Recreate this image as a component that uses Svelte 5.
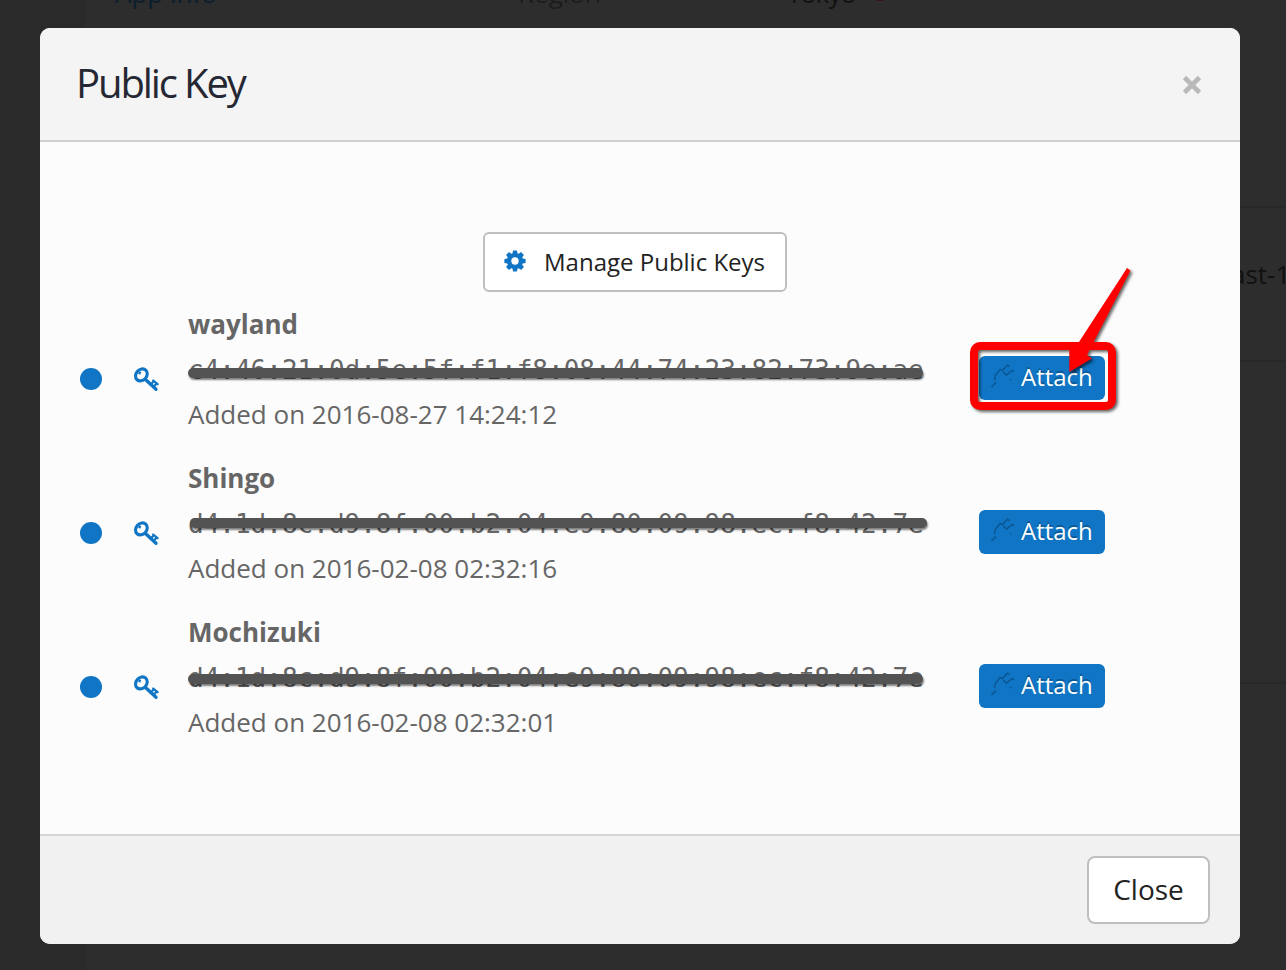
<script>
  const keys = [
    { name: 'wayland', print: 'c4:46:21:0d:5e:5f:f1:f8:08:44:74:23:82:73:9e:ae', added: '2016-08-27 14:24:12', bar: 'first' },
    { name: 'Shingo', print: 'd4:1d:8c:d9:8f:00:b2:04:e9:80:09:98:ec:f8:42:7e', added: '2016-02-08 02:32:16', bar: 'second' },
    { name: 'Mochizuki', print: 'd4:1d:8c:d9:8f:00:b2:04:e9:80:09:98:ec:f8:42:7e', added: '2016-02-08 02:32:01', bar: 'third' }
  ];
</script>

<div class="page">
  <div class="backdrop">
    <div class="rail"></div>
    <span class="behind info">App info</span>
    <span class="behind region">Region</span>
    <span class="behind city">Tokyo</span>
    <i class="pin"></i>
    <span class="behind zone">ast-1</span>
    <i class="rule r1"></i><i class="rule r2"></i><i class="rule r3"></i>
  </div>

  <section class="modal">
    <header>
      <h1>Public Key</h1>
      <button class="x" aria-label="Close">
        <svg width="20" height="20" viewBox="0 0 20 20"><path d="M2.5 2.5 17.5 17.5M17.5 2.5 2.5 17.5" stroke="#b9b9b9" stroke-width="4.6" /></svg>
      </button>
    </header>

    <main>
      <button class="manage">
        <svg width="22" height="22" viewBox="-11 -11 22 22">
          <g fill="#0f75c4">
            {#each [0, 45, 90, 135] as a}
              <path transform="rotate({a})" d="M-2-10.6H2L2.7-6V6L2 10.6H-2L-2.7 6V-6Z" />
            {/each}
            <circle r="8.1" />
          </g>
          <circle r="3.7" fill="#fff" />
        </svg>
        <span>Manage Public Keys</span>
      </button>

      <div class="list">
        {#each keys as k}
          <div class="row">
            <span class="dot"></span>
            <svg class="key" width="26" height="26" viewBox="0 0 26 26" fill="none" stroke="#0f75c4">
              <ellipse cx="8.400" cy="8.900" rx="6.500" ry="5.300" transform="rotate(-48 8.400 8.900)" stroke-width="3.100" />
              <path d="M7.300 5.600 6.200 8.200" stroke-width="2.200" />
              <path d="M12.500 13.500 23 23.300" stroke-width="3.300" stroke-linecap="round" />
              <path d="M17.500 18.800 20.800 15.300M20.500 21 23.800 17.300M20.200 14.500 24.600 18.200" stroke-width="2.200" stroke-linecap="round" />
            </svg>
            <div class="text">
              <strong>{k.name}</strong>
              <div class="print"><span class="hash">{k.print}</span><i class="bar {k.bar}"></i></div>
              <div>Added on {k.added}</div>
            </div>
            <button class="attach">
              <svg width="25" height="25" viewBox="0 0 25 25" fill="none" stroke="#0b5490" stroke-width="1.4">
                <path d="M.5 23 5 18.5M3.500 16.200 4.300 11.500 9 5.500 11.500 6.500 16.500 1.300 18.500 2.800M12 7.800 15.500 11 21 6.500 23 7.500M18.700 15.500h1.400" />
              </svg>
              <span>Attach</span>
            </button>
          </div>
        {/each}
      </div>
    </main>

    <footer><button class="close"><span>Close</span></button></footer>
  </section>

  <svg class="callout" width="200" height="180" viewBox="950 250 200 180">
    <rect x="974" y="346" width="138" height="60" rx="6" fill="none" stroke="#f00" stroke-width="8" />
    <path d="M1127 268 1130.500 270.500 1087 355 1092 358.500 1069.300 372V350H1074L1079 342Z" fill="#f00" />
  </svg>
</div>

<style>
  :global(body) { margin: 0; overflow: hidden; }
  .page {
    position: relative;
    box-sizing: border-box;
    width: 1286px;
    height: 970px;
    padding: 28px 46px 26px 40px;
    overflow: hidden;
    background: #2d2d2d;
    font-family: "Open Sans", "Noto Sans", sans-serif;
    font-size: 26px;
    color: #666;
  }
  .backdrop { position: absolute; inset: 0; }
  .rail { width: 86px; height: 100%; background: #2a2a2a; }
  .behind { position: absolute; line-height: 36px; white-space: nowrap; }
  .info { left: 115px; top: -25px; color: #0b1e2d; }
  .region { left: 518px; top: -25px; color: #1c1c1c; }
  .city { left: 787px; top: -25px; color: #111; font-weight: 500; letter-spacing: -0.7px; }
  .zone { left: 1231px; top: 256px; color: #111; }
  .pin { position: absolute; left: 872px; top: -15px; width: 16px; height: 16px; border-radius: 50%; background: #390d0d; }
  .rule { position: absolute; left: 1240px; right: 0; height: 2px; background: #282828; }
  .r1 { top: 206px; }
  .r2 { top: 360px; }
  .r3 { top: 682px; }

  .modal {
    position: relative;
    display: flex;
    flex-direction: column;
    height: 916px;
    border-radius: 10px;
    overflow: hidden;
    background: #fcfcfc;
  }
  header {
    display: flex;
    align-items: center;
    justify-content: space-between;
    box-sizing: border-box;
    height: 114px;
    padding: 0 38px 0 36px;
    background: #f4f4f4;
    border-bottom: 2px solid #d0d0d0;
  }
  h1 { margin: -2px 0 0; font-size: 40px; font-weight: 400; letter-spacing: -2.1px; line-height: 54px; color: #252733; }
  button { font: inherit; margin: 0; padding: 0; border: 0; background: none; }
  .x { display: flex; margin-top: 2px; }
  main { display: flex; flex: 1; flex-direction: column; align-items: center; padding-top: 90px; }
  .manage {
    display: flex;
    align-items: center;
    gap: 18px;
    box-sizing: border-box;
    width: 304px;
    height: 60px;
    margin-right: 10px;
    padding: 0 0 2px 19px;
    border: 2px solid #bfbfbf;
    border-radius: 6px;
    background: #fff;
    color: #222;
    font-size: 24px;
    white-space: nowrap;
  }
  .list { display: flex; flex-direction: column; align-self: stretch; gap: 19px; margin-top: 10px; }
  .row { display: flex; align-items: center; height: 135px; padding-left: 40px; }
  .dot { flex: none; width: 22px; height: 22px; margin-top: 19px; border-radius: 50%; background: #0f75c4; }
  .key { flex: none; margin: 19px 0 0 31px; }
  .text { width: 791px; margin-left: 29px; line-height: 45px; white-space: nowrap; }
  strong { display: block; font-weight: 700; }
  .print { position: relative; height: 45px; font-family: "DejaVu Sans Mono", monospace; }
  .hash { display: block; padding-top: 1px; }
  .bar { position: absolute; left: 0; width: 735px; height: 10px; border-radius: 6px; background: #535353; box-shadow: 1px 2px 2px rgba(0, 0, 0, 0.5); }
  .first { top: 21px; }
  .second { top: 17px; left: 2px; width: 737px; }
  .third { top: 19px; }
  .attach {
    display: flex;
    align-items: center;
    gap: 5px;
    box-sizing: border-box;
    width: 126px;
    height: 44px;
    margin-top: 16px;
    padding: 0 0 2px 12px;
    border-radius: 6px;
    background: #0f75c4;
    color: #fff;
    font-size: 24px;
    text-shadow: 0 -2px 0 rgba(0, 0, 0, 0.25);
  }
  footer {
    display: flex;
    align-items: center;
    justify-content: flex-end;
    box-sizing: border-box;
    height: 110px;
    padding-right: 30px;
    border-top: 2px solid #d5d5d5;
    background: #f1f1f1;
  }
  .close { box-sizing: border-box; width: 123px; height: 68px; padding-bottom: 2px; border: 2px solid #bfbfbf; border-radius: 8px; background: #fff; color: #222; font-size: 28px; }
  .callout { position: absolute; left: 950px; top: 250px; filter: drop-shadow(2px 2px 1.5px rgba(0, 0, 0, 0.6)); }
</style>
